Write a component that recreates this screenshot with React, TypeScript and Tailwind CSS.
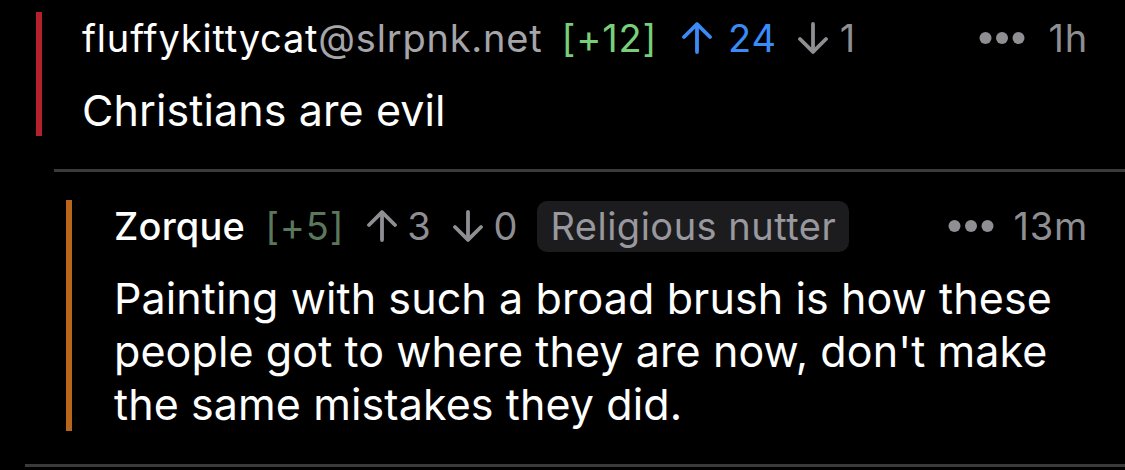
const ArrowUp = ({ className }: { className?: string }) => (
  <svg viewBox="0 0 32 32" className={className} fill="none" stroke="currentColor" strokeWidth={3.8} strokeLinecap="round" strokeLinejoin="round">
    <path d="M16 30V2.5" />
    <path d="M3 15L16 2.2L29 15" />
  </svg>
);

const ArrowDown = ({ className }: { className?: string }) => (
  <svg viewBox="0 0 32 32" className={className} fill="none" stroke="currentColor" strokeWidth={3.8} strokeLinecap="round" strokeLinejoin="round">
    <path d="M16 2v27.5" />
    <path d="M3 17L16 29.8L29 17" />
  </svg>
);

const Dots = () => (
  <svg viewBox="0 0 46 14" className="w-[46px] h-[14px] text-[#8e8e93]" fill="currentColor">
    <circle cx="6.5" cy="7" r="6" />
    <circle cx="23" cy="7" r="6" />
    <circle cx="39.5" cy="7" r="6" />
  </svg>
);

export default function App() {
  return (
    <div className="w-[1125px] h-[470px] overflow-hidden bg-black text-white font-['Inter','Noto_Sans',sans-serif]">
      {/* Top comment */}
      <div className="flex pl-[36px] pt-[12px]">
        <div className="w-[6px] bg-[#b4202b] shrink-0" />
        <div className="flex-1 pl-[40px] pr-[37px]">
          <div className="h-[52px] flex items-center text-[38px] tracking-[0.8px] mb-[20px]">
            <span className="text-white">fluffykittycat</span>
            <span className="text-[#a5a5aa]">@slrpnk.net</span>
            <span className="ml-[19px] text-[#78cf7a]">[+12]</span>
            <ArrowUp className="ml-[24px] w-[32px] h-[32px] text-[#3b8bf7]" />
            <span className="ml-[15px] text-[#3b8bf7]">24</span>
            <ArrowDown className="ml-[20px] w-[32px] h-[32px] text-[#8e8e93]" />
            <span className="ml-[11px] text-[#8e8e93]">1</span>
            <div className="flex-1" />
            <Dots />
            <span className="ml-[23px] text-[#8e8e93]">1h</span>
          </div>
          <div className="text-[43px] leading-[52px] tracking-[0.1px]">Christians are evil</div>
        </div>
      </div>

      <div className="ml-[54px] mt-[33px] h-[3px] bg-[#3a3a3c]" />

      {/* Reply */}
      <div className="flex pl-[66px] pt-[28px]">
        <div className="w-[6px] bg-[#b8661c] shrink-0" />
        <div className="flex-1 pl-[42px] pr-[37px]">
          <div className="h-[52px] flex items-center text-[38px] tracking-[0.8px] mb-[20px]">
            <span className="text-white font-medium tracking-[0.2px]">Zorque</span>
            <span className="ml-[20px] text-[#5b785c]">[+5]</span>
            <ArrowUp className="ml-[22px] w-[32px] h-[32px] text-[#8e8e93]" />
            <span className="ml-[9px] text-[#8e8e93]">3</span>
            <ArrowDown className="ml-[20px] w-[32px] h-[32px] text-[#8e8e93]" />
            <span className="ml-[10px] text-[#8e8e93]">0</span>
            <span className="ml-[19px] h-[51px] flex items-center rounded-[10px] bg-[#1c1c1e] px-[13px] tracking-[0.5px] text-[#98989e]">
              Religious nutter
            </span>
            <div className="flex-1" />
            <Dots />
            <span className="ml-[19px] text-[#8e8e93]">13m</span>
          </div>
          <div className="text-[43px] leading-[53px] tracking-[0.1px] pr-[10px]">
            Painting with such a broad brush is how these people got to where they are now, don't make the same mistakes they did.
          </div>
        </div>
      </div>

      <div className="ml-[25px] mt-[33px] h-[3px] bg-[#3a3a3c]" />
    </div>
  );
}
